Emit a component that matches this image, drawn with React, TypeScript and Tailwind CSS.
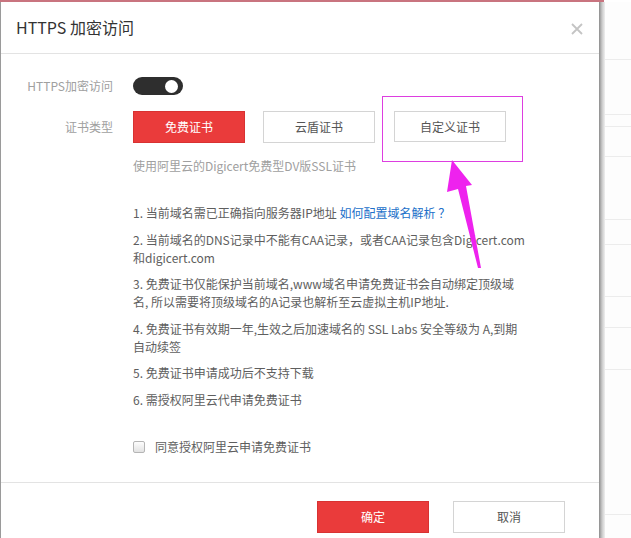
import React from "react";

const font = {
  fontFamily: '"Noto Sans CJK SC", "Liberation Sans", sans-serif',
};

export default function App() {
  const bgLines = [58, 55, 12, 30, 63, 25, 52, 31, 42, 145];
  return (
    <div className="relative w-[631px] h-[538px] overflow-hidden bg-white" style={font}>
      <div className="h-[2px] w-[604px] bg-[#c9747f]" />
      <div className="flex h-[536px]">
        {/* dialog */}
        <div className="relative w-[599px] shrink-0 bg-white border-l border-[#9a9a9a] flex flex-col">
          {/* header */}
          <div className="h-[52px] border-b border-[#e3e3e3] flex items-center justify-between pl-[15px] pr-[16px]">
            <span className="text-[16px] leading-[20px] text-[#333] mt-[-1px]">HTTPS 加密访问</span>
            <svg width="12" height="12" viewBox="0 0 12 12" className="mt-[2px]">
              <path d="M1 1 L11 11 M11 1 L1 11" stroke="#c4c4c4" strokeWidth="1.8" />
            </svg>
          </div>
          {/* body */}
          <div className="pt-[23px] pb-[26px] text-[12px]">
            <div className="flex items-center h-[18px] gap-[20px]">
              <div className="w-[112px] text-right text-[#a0a0a0] leading-[18px]">HTTPS加密访问</div>
              <div className="w-[50px] h-[18px] rounded-full bg-[#2e2e2e] flex items-center justify-end pr-[5px]">
                <div className="w-[13px] h-[13px] rounded-full bg-white" />
              </div>
            </div>
            <div className="flex items-center h-[32px] gap-[20px] mt-[16px]">
              <div className="w-[112px] text-right text-[#a0a0a0] leading-[18px]">证书类型</div>
              <div className="flex gap-[18px]">
                <div className="w-[112px] h-[32px] flex items-center justify-center bg-[#ea3b3b] border border-[#d83232] text-white">免费证书</div>
                <div className="w-[112px] h-[32px] flex items-center justify-center bg-white border border-[#d4d4d4] text-[#555]">云盾证书</div>
                <div className="w-[112px] h-[31px] flex items-center justify-center bg-white border border-[#d4d4d4] text-[#555] ml-[1px]">自定义证书</div>
              </div>
            </div>
            <div className="pl-[132px] mt-[14px] leading-[18px] text-[#a0a0a0]">使用阿里云的Digicert免费型DV版SSL证书</div>
            <div className="pl-[132px] mt-[29px] flex flex-col gap-[8.5px] leading-[18px] text-[#5e5e5e] whitespace-nowrap">
              <div>
                1. 当前域名需已正确指向服务器IP地址 <span className="text-[#2170c9]">如何配置域名解析 ？</span>
              </div>
              <div>
                2. 当前域名的DNS记录中不能有CAA记录，或者CAA记录包含Digicert.com
                <br />和digicert.com
              </div>
              <div>
                3. 免费证书仅能保护当前域名,www域名申请免费证书会自动绑定顶级域
                <br />名, 所以需要将顶级域名的A记录也解析至云虚拟主机IP地址.
              </div>
              <div>
                4. 免费证书有效期一年,生效之后加速域名的 SSL Labs 安全等级为 A,到期
                <br />自动续签
              </div>
              <div>5. 免费证书申请成功后不支持下载</div>
              <div>6. 需授权阿里云代申请免费证书</div>
            </div>
            <div className="pl-[132px] mt-[29px] flex items-center h-[18px] gap-[10px]">
              <div className="w-[12px] h-[12px] rounded-[2px] border border-[#b5b5b5] bg-gradient-to-b from-[#fdfdfd] to-[#e2e2e2]" />
              <span className="text-[#5e5e5e] leading-[18px]">同意授权阿里云申请免费证书</span>
            </div>
          </div>
          {/* footer */}
          <div className="border-t border-[#e3e3e3] pt-[18px] flex justify-end gap-[24px] pr-[34px] text-[12px]">
            <div className="w-[112px] h-[32px] flex items-center justify-center bg-[#ea3b3b] border border-[#d83232] text-white">确定</div>
            <div className="w-[112px] h-[32px] flex items-center justify-center bg-white border border-[#d4d4d4] text-[#555]">取消</div>
          </div>

          {/* annotation */}
          <div className="absolute left-[381px] top-[94px] w-[141px] h-[66px] border-[1.5px] border-[#dd3ee0]" />
          <svg className="absolute left-[430px] top-[155px]" width="60" height="120" viewBox="430 157 60 120">
            <polygon
              points="451,160 471,185 465,186 480,268 477,268 457,189 446,192"
              fill="#ee22ee"
            />
          </svg>
        </div>
        {/* shadow */}
        <div className="w-[6px] shrink-0 bg-gradient-to-r from-[#8c8c8c] via-[#c9c9c9] to-[#efefef]" />
        {/* background strip */}
        <div className="flex-1 bg-[#fdfdfd] flex flex-col">
          {bgLines.map((h, i) => (
            <div key={i} className="border-b border-[#ececec]" style={{ height: h }} />
          ))}
        </div>
      </div>
    </div>
  );
}
